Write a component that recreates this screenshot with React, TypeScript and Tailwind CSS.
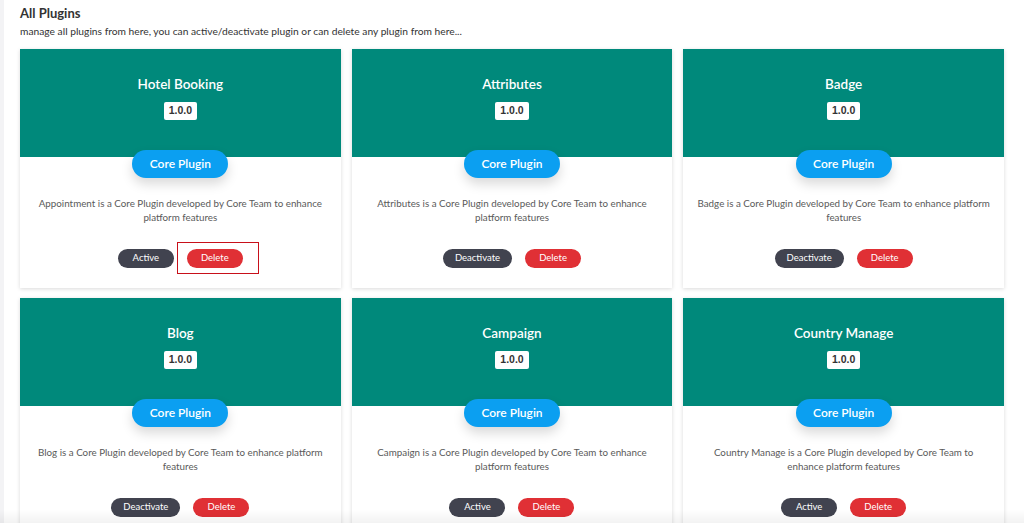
type Plugin = {
  name: string;
  version: string;
  lines: string[];
  status: "Active" | "Deactivate";
  marked?: boolean;
};

const plugins: Plugin[] = [
  {
    name: "Hotel Booking",
    version: "1.0.0",
    lines: ["Appointment is a Core Plugin developed by Core Team to enhance", "platform features"],
    status: "Active",
    marked: true,
  },
  {
    name: "Attributes",
    version: "1.0.0",
    lines: ["Attributes is a Core Plugin developed by Core Team to enhance", "platform features"],
    status: "Deactivate",
  },
  {
    name: "Badge",
    version: "1.0.0",
    lines: ["Badge is a Core Plugin developed by Core Team to enhance platform", "features"],
    status: "Deactivate",
  },
  {
    name: "Blog",
    version: "1.0.0",
    lines: ["Blog is a Core Plugin developed by Core Team to enhance platform", "features"],
    status: "Deactivate",
  },
  {
    name: "Campaign",
    version: "1.0.0",
    lines: ["Campaign is a Core Plugin developed by Core Team to enhance", "platform features"],
    status: "Active",
  },
  {
    name: "Country Manage",
    version: "1.0.0",
    lines: ["Country Manage is a Core Plugin developed by Core Team to", "enhance platform features"],
    status: "Active",
  },
];

const PluginCard = ({ plugin }: { plugin: Plugin }) => {
  return (
    <section className="flex flex-col bg-white shadow-[0_1px_4px_rgba(0,0,0,0.15)]">
      <header className="flex h-[108px] flex-col items-center bg-[#00897b] pt-[25px]">
        <h3 className="text-[13.5px] leading-[20px] font-semibold text-white">{plugin.name}</h3>
        <span className="mt-[8px] flex h-[18px] items-center rounded-[2px] bg-white px-[5px] font-['Liberation_Sans',sans-serif] text-[10.5px] font-bold text-[#333]">
          {plugin.version}
        </span>
      </header>
      <article className="flex flex-col items-center pb-[20px]">
        <span className="-mt-[7px] flex h-[28px] w-[96px] items-center justify-center rounded-full bg-[#0b9ff1] text-[12px] font-semibold text-white shadow-[0_6px_12px_rgba(0,0,0,0.15)]">
          Core Plugin
        </span>
        <p className="mt-[18px] text-center text-[9.8px] leading-[14px] text-[#5a5a5a]">
          {plugin.lines.map((line, index) => (
            <span key={index} className="block">
              {line}
            </span>
          ))}
        </p>
        <div className="mt-[25px] flex items-center gap-[13px]">
          <button className="flex h-[19px] min-w-[56px] items-center justify-center rounded-full bg-[#41434f] px-[12px] text-[9.5px] text-white">
            {plugin.status}
          </button>
          <div className="relative flex">
            <button className="flex h-[19px] w-[56px] items-center justify-center rounded-full bg-[#e03035] text-[9.5px] text-white">
              Delete
            </button>
            {plugin.marked && (
              <span className="absolute -top-[7px] -right-[16px] -bottom-[6px] -left-[10px] border border-[#c8101a]" />
            )}
          </div>
        </div>
      </article>
    </section>
  );
};

export default function App() {
  return (
    <div className="min-h-screen bg-white font-['Lato',sans-serif] text-[#333]">
      <div className="border-l-[4px] border-[#f3f3f5] pt-[4px] pr-[20px] pb-[20px] pl-[16px]">
        <h2 className="text-[13px] leading-[18px] font-bold text-[#333]">All Plugins</h2>
        <p className="mt-[2px] text-[10.25px] leading-[14px] text-[#333]">
          manage all plugins from here, you can active/deactivate plugin or can delete any plugin from here...
        </p>
        <div className="mt-[11px] grid grid-cols-3 gap-x-[11px] gap-y-[10px]">
          {plugins.map((plugin) => (
            <PluginCard key={plugin.name} plugin={plugin} />
          ))}
        </div>
      </div>
      <div className="pointer-events-none fixed inset-x-0 bottom-0 h-[14px] bg-gradient-to-b from-transparent to-black/5" />
    </div>
  );
}
